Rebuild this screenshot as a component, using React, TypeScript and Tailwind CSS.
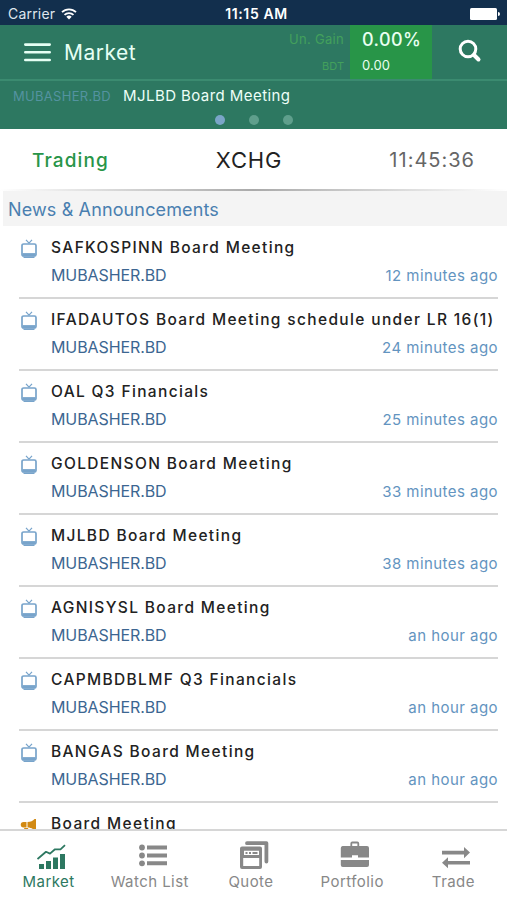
import type { ReactNode } from "react";

interface NewsItem {
  title: string;
  source: string;
  age: string;
  kind: "tv" | "announcement";
}

const NEWS: NewsItem[] = [
  { title: "SAFKOSPINN Board Meeting", source: "MUBASHER.BD", age: "12 minutes ago", kind: "tv" },
  { title: "IFADAUTOS Board Meeting schedule under LR 16(1)", source: "MUBASHER.BD", age: "24 minutes ago", kind: "tv" },
  { title: "OAL Q3 Financials", source: "MUBASHER.BD", age: "25 minutes ago", kind: "tv" },
  { title: "GOLDENSON Board Meeting", source: "MUBASHER.BD", age: "33 minutes ago", kind: "tv" },
  { title: "MJLBD Board Meeting", source: "MUBASHER.BD", age: "38 minutes ago", kind: "tv" },
  { title: "AGNISYSL Board Meeting", source: "MUBASHER.BD", age: "an hour ago", kind: "tv" },
  { title: "CAPMBDBLMF Q3 Financials", source: "MUBASHER.BD", age: "an hour ago", kind: "tv" },
  { title: "BANGAS Board Meeting", source: "MUBASHER.BD", age: "an hour ago", kind: "tv" },
  { title: "Board Meeting", source: "", age: "", kind: "announcement" },
];

const TABS: { label: string; icon: ReactNode }[] = [
  { label: "Market", icon: <ChartIcon /> },
  { label: "Watch List", icon: <ListIcon /> },
  { label: "Quote", icon: <QuoteIcon /> },
  { label: "Portfolio", icon: <BriefcaseIcon /> },
  { label: "Trade", icon: <TradeIcon /> },
];

export default function App() {
  return (
    <div className="flex h-[900px] w-[507px] flex-col overflow-hidden bg-white font-['Inter','Liberation_Sans',sans-serif] text-[#222]">
      <StatusBar />
      <Header />
      <Ticker />
      <MarketStatus />
      <h2 className="ml-[3px] flex h-[35px] shrink-0 items-center bg-[#f4f4f4] pt-px pl-[5px] text-[18px] tracking-[0.13px] text-[#4a7fb0]">
        News &amp; Announcements
      </h2>
      <ul className="min-h-0 flex-1 overflow-hidden pt-px">
        {NEWS.map((item) => (
          <NewsRow key={item.title} item={item} />
        ))}
      </ul>
      <TabBar />
    </div>
  );
}

function StatusBar() {
  return (
    <div className="grid h-[25px] shrink-0 grid-cols-[1fr_auto_1fr] items-center bg-[#122f4d] pt-[2px] text-[14px] leading-none text-white">
      <div className="flex items-center gap-[6px] pl-[8px]">
        <span className="tracking-[0.2px] text-[#dfe6ed]">Carrier</span>
        <WifiIcon />
      </div>
      <span className="pl-[6px] font-semibold tracking-[0.6px]">11:15 AM</span>
      <div className="flex items-center justify-end pr-[7px]">
        <svg width="30" height="12" viewBox="0 0 30 12" fill="#fff">
          <rect width="27" height="12" rx="1.5" />
          <path d="M28 4a2 2 0 0 1 0 4z" />
        </svg>
      </div>
    </div>
  );
}

function Header() {
  return (
    <header className="flex h-[56px] shrink-0 border-b-2 border-[#3b8b70] bg-[#2d7861]">
      <div className="flex items-center pl-6">
        <svg width="27" height="20" viewBox="0 0 27 20" stroke="#e6fff4" strokeWidth="2.6" strokeLinecap="round">
          <path d="M1.3 2.6h24.4M1.3 10.3h24.4M1.3 18h24.4" />
        </svg>
        <h1 className="ml-[13px] pt-[2px] text-[21px] tracking-[0.5px] text-[#e6fff4]">Market</h1>
      </div>
      <div className="ml-auto flex flex-col items-end pt-[6px] pr-[6px] text-[#43a05c]">
        <span className="text-[13px] leading-[16px] tracking-[0.3px]">Un. Gain</span>
        <span className="mt-[12px] text-[11px] leading-[14px]">BDT</span>
      </div>
      <div className="w-[82px] bg-[#289548] pl-3 text-[#e9fff0]">
        <p className="pt-[4px] text-[18px] leading-[22px] font-medium tracking-[0.4px]">0.00%</p>
        <p className="mt-[5px] text-[13px] leading-[18px] tracking-[0.1px]">0.00</p>
      </div>
      <div className="flex w-[75px] justify-center pt-[14px]">
        <svg width="24" height="24" viewBox="0 0 24 24" fill="none" stroke="#fff" strokeLinecap="round">
          <circle cx="10" cy="10" r="7.8" strokeWidth="3" />
          <path d="M16 16l4.5 4.5" strokeWidth="4" />
        </svg>
      </div>
    </header>
  );
}

function Ticker() {
  return (
    <div className="flex h-12 shrink-0 flex-col bg-[#2d7861] pt-[5px]">
      <div className="flex items-baseline pl-[13px] leading-[20px]">
        <span className="text-[13px] tracking-[0.3px] text-[#5493a0]">MUBASHER.BD</span>
        <span className="ml-[12px] text-[15px] tracking-[0.43px] text-[#eefff8]">MJLBD Board Meeting</span>
      </div>
      <div className="mt-[9px] flex justify-center gap-6">
        <i className="size-[10px] rounded-full bg-[#7aa5c8]" />
        <i className="size-[10px] rounded-full bg-[#5f9f8c]" />
        <i className="size-[10px] rounded-full bg-[#5f9f8c]" />
      </div>
    </div>
  );
}

function MarketStatus() {
  return (
    <div className="flex h-[62px] shrink-0 flex-col">
      <div className="flex flex-1 items-center justify-between pt-[2px] pr-8 pl-8">
        <span className="w-[148px] pt-[2px] text-[19px] font-medium tracking-[1.1px] text-[#289548]">Trading</span>
        <span className="w-[138px] pr-[9px] text-center text-[22px] tracking-[0.8px] text-[#222]">XCHG</span>
        <span className="w-[148px] text-right text-[20px] tracking-[1px] text-[#666]">11:45:36</span>
      </div>
      <div className="h-[2px] bg-linear-to-r from-white via-[#aaa] to-white" />
    </div>
  );
}

function NewsRow({ item }: { item: NewsItem }) {
  return (
    <li className="mr-[9px] ml-[19px] flex h-[72px] border-b-2 border-[#d6d6d6]">
      <div className="w-8 shrink-0 pt-[12px] pl-px">{item.kind === "tv" ? <TvIcon /> : <HornIcon />}</div>
      <div className="min-w-0 flex-1 pt-[11px]">
        <p className="text-[15.5px] leading-5 font-medium tracking-[1.35px] whitespace-nowrap text-[#222]">
          {item.title}
        </p>
        {item.source && (
          <div className="mt-[7px] flex items-baseline justify-between leading-5">
            <span className="text-[16px] tracking-[-0.1px] text-[#3c6691]">{item.source}</span>
            <span className="text-[15px] tracking-[0.45px] text-[#6394c0]">{item.age}</span>
          </div>
        )}
      </div>
    </li>
  );
}

function TabBar() {
  return (
    <nav className="grid h-[71px] shrink-0 grid-cols-5 border-t-2 border-[#d6d6d6] bg-white pl-px">
      {TABS.map((tab, i) => (
        <div
          key={tab.label}
          className={`flex flex-col items-center pt-[9px] ${i === 0 ? "text-[#2d7861]" : "text-[#888]"}`}
        >
          {tab.icon}
          <span className="mt-[2px] mr-[6px] text-[15px] leading-5 tracking-[0.45px] whitespace-nowrap">
            {tab.label}
          </span>
        </div>
      ))}
    </nav>
  );
}

function WifiIcon() {
  return (
    <svg width="16" height="12" viewBox="0 0 16 12" fill="none" stroke="#fff" strokeWidth="1.8">
      <path d="M1 4.2a10 10 0 0 1 14 0" />
      <path d="M3.5 6.9a6.4 6.4 0 0 1 9 0" />
      <path d="M8 11.5L5.3 8.8a3.9 3.9 0 0 1 5.4 0z" fill="#fff" stroke="none" />
    </svg>
  );
}

function TvIcon() {
  return (
    <svg width="18" height="20" viewBox="0 0 18 20" fill="none" stroke="#78a4cb">
      <path d="M6 .8l3 3.4 3-3.4" strokeWidth="1.2" />
      <rect x="2" y="5" width="14" height="12" rx="1.6" strokeWidth="1.7" />
      <path d="M2.5 15.7h13" strokeWidth="3.2" />
      <path d="M3.5 18.3h11" strokeWidth="1.4" />
    </svg>
  );
}

function HornIcon() {
  return (
    <svg width="18" height="20" viewBox="0 0 18 20" fill="#d28a14">
      <path d="M7.5 7c3 0 5.5-1.200 7-3H16v11.500h-1.500c-1.500-1.800-4-3-7-3z" />
      <path d="M6.5 7h-3a2.700 2.700 0 0 0 0 5.500h3z" />
      <path d="M4 13h4l1 4H5.500z" />
    </svg>
  );
}

function ChartIcon() {
  return (
    <svg width="30" height="30" viewBox="0 0 30 30" fill="currentColor">
      <path d="M2 24h5v5H2zM9 21h5v8H9zM16 17.5h5V29h-5zM23 14h5v15h-5z" />
      <path
        d="M.5 19l8.500-7.200 4 1.800 5-4.300h5.500L28 5.200"
        fill="none"
        stroke="currentColor"
        strokeWidth="1.8"
        strokeLinejoin="round"
      />
    </svg>
  );
}

function ListIcon() {
  return (
    <svg width="30" height="30" viewBox="0 0 30 30" fill="currentColor">
      <circle cx="4" cy="7.5" r="2.9" />
      <circle cx="4" cy="15.5" r="2.9" />
      <circle cx="4" cy="23.3" r="2.9" />
      <path d="M9 5.5h20v4H9zM9 13.5h20v4H9zM9 21.3h20v4H9z" />
    </svg>
  );
}

function QuoteIcon() {
  return (
    <svg width="30" height="30" viewBox="0 0 30 30" fill="currentColor">
      <path d="M8 1.3h19.500a1.800 1.800 0 0 1 1.800 1.800v18.400a1.900 1.900 0 0 1-3.800 0V5.100H8a1.900 1.900 0 0 1 0-3.800z" />
      <path
        fillRule="evenodd"
        d="M3 6.500h18a2 2 0 0 1 2 2V27a2 2 0 0 1-2 2H3a2 2 0 0 1-2-2V8.500a2 2 0 0 1 2-2zM5 10.800v4.200h15v-4.200zM4.200 18v8h16v-8z"
      />
      <path d="M6.500 12h2v1.900h-2zM10 12h2v1.900h-2zM13.500 12h5v1.900h-5z" />
    </svg>
  );
}

function BriefcaseIcon() {
  return (
    <svg width="30" height="30" viewBox="0 0 30 30" fill="currentColor">
      <path
        d="M11.300 6.500V3.500a1 1 0 0 1 1-1h5a1 1 0 0 1 1 1v3"
        fill="none"
        stroke="currentColor"
        strokeWidth="1.8"
      />
      <path d="M2.500 6h24.500a2 2 0 0 1 2 2v9.500H18v-2.300h-6v2.300H.8V8a2 2 0 0 1 1.700-2z" />
      <path d="M.8 20H29v5a2 2 0 0 1-2 2H2.800a2 2 0 0 1-2-2z" />
    </svg>
  );
}

function TradeIcon() {
  return (
    <svg width="30" height="30" viewBox="0 0 30 30" fill="currentColor">
      <path d="M1 10.800h22V7l6 5.600-6 5.600v-3.800H1z" />
      <path d="M29 24.600H7v3.600L1 22.700l6-5.500v3.700h22z" />
    </svg>
  );
}
